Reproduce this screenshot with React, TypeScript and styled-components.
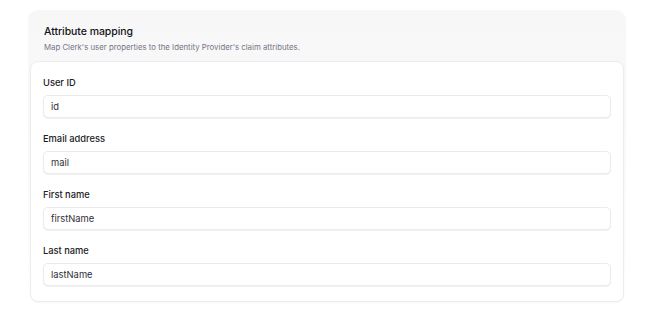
import styled, {createGlobalStyle} from 'styled-components';

const GlobalStyle = createGlobalStyle`
	* {
		box-sizing: border-box;
	}
	body {
		margin: 0;
		background-color: #ffffff;
		font-family: Inter, 'Noto Sans', sans-serif;
		color: #131316;
	}
`;
const Page = styled.div`
	width: 670px;
	height: 322px;
	padding: 10px 44px 0 28px;
`;
const Section = styled.section`
	border-radius: 10px;
	padding: 0 2px 1px;
	background: linear-gradient(to bottom, #f7f7f8 0%, #f9f9f9 40%, #ffffff 100%);
`;
const Header = styled.div`
	display: flex;
	flex-direction: column;
	gap: 3px;
	padding: 15px 14px 9px;
`;
const Title = styled.h2`
	margin: 0;
	font-size: 10.5px;
	font-weight: 500;
	line-height: 14px;
	letter-spacing: -0.05px;
	color: #131316;
`;
const Subtitle = styled.p`
	margin: 0;
	font-size: 7.8px;
	line-height: 10px;
	color: #747686;
`;
const Card = styled.div`
	display: flex;
	flex-direction: column;
	gap: 15px;
	padding: 15px 12px 15px;
	border: 1px solid #ececee;
	border-radius: 8px;
	background-color: #ffffff;
	box-shadow: 0 1px 2px rgba(0, 0, 0, 0.04);
`;
const Field = styled.label`
	display: flex;
	flex-direction: column;
	gap: 6px;
`;
const Label = styled.span`
	font-size: 9.3px;
	font-weight: 500;
	line-height: 12px;
	color: #212126;
`;
const Input = styled.div`
	display: flex;
	align-items: center;
	height: 23px;
	padding: 0 7px;
	border: 1px solid #ebebed;
	border-radius: 5px;
	background-color: #ffffff;
	box-shadow: 0 1px 1px rgba(0, 0, 0, 0.06);
	font-size: 9.4px;
	color: #2f3037;
`;

const fields = [
	{label: 'User ID', value: 'id'},
	{label: 'Email address', value: 'mail'},
	{label: 'First name', value: 'firstName'},
	{label: 'Last name', value: 'lastName'},
];

function App() {
	return (
		<>
			<GlobalStyle />
			<Page>
				<Section>
					<Header>
						<Title>Attribute mapping</Title>
						<Subtitle>
							Map Clerk's user properties to the Identity Provider's claim
							attributes.
						</Subtitle>
					</Header>
					<Card>
						{fields.map((f) => (
							<Field key={f.label}>
								<Label>{f.label}</Label>
								<Input>{f.value}</Input>
							</Field>
						))}
					</Card>
				</Section>
			</Page>
		</>
	);
}

export default App;
